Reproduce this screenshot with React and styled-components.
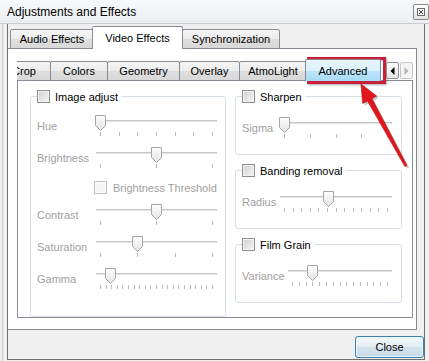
import React, { useId } from 'react';
import styled, { createGlobalStyle } from 'styled-components';

const GlobalStyle = createGlobalStyle`
  html, body {
    margin: 0;
    padding: 0;
    background: #f0f0f0;
  }
  body {
    font-family: "Liberation Sans", Arial, sans-serif;
    font-size: 11px;
    color: #000;
  }
`;

const Window = styled.div`
  position: relative;
  width: 429px;
  height: 361px;
  display: flex;
  flex-direction: column;
  background: #f0f0f0;
  overflow: hidden;
`;

const TitleBar = styled.div`
  height: 24px;
  box-sizing: border-box;
  display: flex;
  align-items: center;
  justify-content: space-between;
  padding-left: 7px;
  background: linear-gradient(#f8f9fa, #eceef0);
  border-bottom: 1px solid #c9cdd2;
`;

const Caption = styled.span`
  font-size: 12px;
  color: #000;
`;

const CloseX = styled.div`
  width: 16px;
  height: 16px;
  box-sizing: border-box;
  border: 1px solid #8a8a8a;
  border-radius: 2px;
  background: linear-gradient(#fdfdfd, #e4e4e4);
  display: flex;
  align-items: center;
  justify-content: center;
`;

const Frame = styled.div`
  flex: 1;
  display: flex;
  margin-left: 2px;
  border-left: 1px solid #c8c8c8;
  padding: 0 4px 1px 4px;
`;

const Client = styled.div`
  width: 418px;
  box-sizing: border-box;
  display: flex;
  flex-direction: column;
  border: 1px solid #6f6f6f;
  border-top: none;
  background: #f0f0f0;
`;

const TopTabs = styled.div`
  position: relative;
  z-index: 1;
  height: 25px;
  display: flex;
  align-items: flex-end;
  padding-left: 2px;
  margin-bottom: -1px;
`;

const TopTab = styled.div`
  flex-shrink: 0;
  box-sizing: border-box;
  width: ${p => p.w}px;
  height: ${p => (p.active ? 23 : 20)}px;
  margin-left: ${p => p.ml || 0}px;
  margin-right: ${p => p.mr || 0}px;
  position: relative;
  z-index: ${p => (p.active ? 2 : 1)};
  display: flex;
  align-items: center;
  justify-content: center;
  border: 1px solid #898c95;
  border-bottom: ${p => (p.active ? 'none' : '1px solid #898c95')};
  border-radius: 2px 2px 0 0;
  background: ${p =>
    p.active ? '#fff' : 'linear-gradient(#f6f6f6, #ebebeb 50%, #dedede 51%, #d8d8d8)'};
`;

const TabPane = styled.div`
  width: 409px;
  height: 282px;
  box-sizing: border-box;
  display: flex;
  flex-direction: column;
  border: 1px solid #898c95;
  border-left: none;
  background: #fff;
  padding: 10px 3px 11px 9px;
`;

const InnerBar = styled.div`
  position: relative;
  z-index: 1;
  height: 22px;
  display: flex;
  margin-bottom: -1px;
`;

const Strip = styled.div`
  width: 369px;
  height: 22px;
  overflow: hidden;
  display: flex;
  align-items: flex-end;
`;

const InnerTab = styled.div`
  flex-shrink: 0;
  box-sizing: border-box;
  width: ${p => p.w}px;
  height: ${p => (p.active ? 22 : 20)}px;
  margin-left: ${p => p.ml}px;
  position: relative;
  z-index: ${p => (p.active ? 2 : 1)};
  display: flex;
  align-items: center;
  justify-content: center;
  border: 1px solid #898c95;
  border-bottom: ${p => (p.active ? 'none' : '1px solid #898c95')};
  border-radius: 2px 2px 0 0;
  background: ${p =>
    p.active
      ? 'linear-gradient(#eaf6fd, #d9f0fc 50%, #bee6fd 51%, #a7d9f5)'
      : 'linear-gradient(#f6f6f6, #ebebeb 50%, #dedede 51%, #d8d8d8)'};
`;

const Scrollers = styled.div`
  display: flex;
  gap: 1px;
  margin-top: 3px;
`;

const ScrollBtn = styled.div`
  width: 13px;
  height: 17px;
  box-sizing: border-box;
  border: 1px solid ${p => (p.disabled ? '#c4c6ca' : '#8e8f8f')};
  border-radius: 2px;
  background: ${p => (p.disabled ? '#f4f4f4' : 'linear-gradient(#ffffff, #e6e6e6)')};
  display: flex;
  align-items: center;
  justify-content: center;
`;

const InnerPane = styled.div`
  flex: 1;
  display: flex;
  gap: 9px;
  border: 1px solid #898c95;
  background: #fff;
  padding: 9px 10px 0 12px;
`;

const Column = styled.div`
  display: flex;
  flex-direction: column;
  gap: 9px;
`;

const Group = styled.fieldset`
  margin: 0;
  min-width: 0;
  box-sizing: border-box;
  width: ${p => p.w}px;
  border: 1px solid #d5dfe5;
  border-radius: 3px;
  padding: ${p => p.pt}px 6px ${p => p.pb}px;
`;

const Legend = styled.legend`
  display: flex;
  align-items: center;
  gap: 5px;
  height: 13px;
  padding: 0 3px 0 0;
  color: #000;
`;

const Check = styled.span`
  display: inline-block;
  flex-shrink: 0;
  width: 13px;
  height: 13px;
  box-sizing: border-box;
  border: 1px solid ${p => (p.disabled ? '#bfc1c4' : '#8e8f8f')};
  background: ${p =>
    p.disabled ? '#f5f5f5' : 'linear-gradient(135deg, #cfd1d4, #f5f5f5)'};
  box-shadow: inset 0 0 0 1px ${p => (p.disabled ? '#fbfbfb' : '#f3f3f3')};
`;

const Row = styled.div`
  display: flex;
  align-items: flex-start;
  height: ${p => p.h || 32}px;
`;

const Label = styled.div`
  width: ${p => p.w}px;
  flex-shrink: 0;
  padding-top: 5px;
  line-height: 13px;
  color: #a0a0a0;
`;

const OptionRow = styled.div`
  display: flex;
  align-items: center;
  gap: 6px;
  height: 25px;
  box-sizing: border-box;
  padding: 2px 0 10px 57px;
  color: #a0a0a0;
`;

const SliderSvg = styled.svg`
  display: block;
  flex-shrink: 0;
`;

const Footer = styled.div`
  flex: 1;
  display: flex;
  justify-content: flex-end;
  align-items: flex-start;
  padding-top: 6px;
`;

const Button = styled.div`
  width: 69px;
  height: 22px;
  box-sizing: border-box;
  display: flex;
  align-items: center;
  justify-content: center;
  border: 1px solid #3c7fb1;
  border-radius: 3px;
  background: linear-gradient(#f2f7fa, #e3edf3 48%, #d3e3ec 52%, #c9dce8);
  box-shadow: inset 0 0 0 1px #e9f4fb;
  color: #000;
`;

const Highlight = styled.div`
  position: absolute;
  left: 307px;
  top: 57px;
  width: 79px;
  height: 27px;
  box-sizing: border-box;
  border: 3px solid #c8203a;
  box-shadow: 1px 1px 2px rgba(0, 0, 0, 0.35), inset 1px 1px 1px rgba(0, 0, 0, 0.25);
  pointer-events: none;
`;

const ArrowSvg = styled.svg`
  position: absolute;
  left: 350px;
  top: 80px;
  pointer-events: none;
`;

function Slider({ w, value, ticks }) {
  const id = 'th' + useId().replace(/[^a-zA-Z0-9]/g, '');
  const lo = 6;
  const hi = w - 6;
  const cx = Math.round(lo + value * (hi - lo)) + 0.5;
  const marks = Array.from({ length: ticks }, (_, i) => Math.round(lo + (i * (hi - lo)) / (ticks - 1)) + 0.5);
  return (
    <SliderSvg width={w} height={22} viewBox={`0 0 ${w} 22`}>
      <defs>
        <linearGradient id={id} x1="0" y1="0" x2="0" y2="1">
          <stop offset="0" stopColor="#ffffff" />
          <stop offset="1" stopColor="#e2e2e2" />
        </linearGradient>
      </defs>
      <line x1={2} x2={w - 1} y1={5.5} y2={5.5} stroke="#c6c6c6" />
      <line x1={2} x2={w - 1} y1={6.5} y2={6.5} stroke="#e3e3e3" />
      {marks.map((x, i) => (
        <line key={i} x1={x} x2={x} y1={17} y2={21} stroke="#bcbcbc" />
      ))}
      <path d={`M${cx - 5} 0.5H${cx + 5}V10.5L${cx} 15.5L${cx - 5} 10.5Z`} fill={`url(#${id})`} stroke="#a6a6a6" />
    </SliderSvg>
  );
}

const innerTabs = [
  { name: 'Crop', w: 54, ml: -20 },
  { name: 'Colors', w: 58, ml: -1 },
  { name: 'Geometry', w: 73, ml: -1 },
  { name: 'Overlay', w: 61, ml: -1 },
  { name: 'AtmoLight', w: 68, ml: -1 },
  { name: 'Advanced', w: 76, ml: -2, active: true },
];

const imageRows = [
  { label: 'Hue', value: 0, ticks: 7 },
  { label: 'Brightness', value: 0.5, ticks: 3 },
  { threshold: true },
  { label: 'Contrast', value: 0.5, ticks: 3 },
  { label: 'Saturation', value: 0.33, ticks: 4 },
  { label: 'Gamma', value: 0.09, ticks: 21, h: 22 },
];

const rightGroups = [
  { title: 'Sharpen', label: 'Sigma', lw: 36, sw: 115, value: 0, ticks: 5 },
  { title: 'Banding removal', label: 'Radius', lw: 36, sw: 115, value: 0.43, ticks: 13 },
  { title: 'Film Grain', label: 'Variance', lw: 44, sw: 107, value: 0.21, ticks: 15 },
];

export default function App() {
  return (
    <Window>
      <GlobalStyle />
      <TitleBar>
        <Caption>Adjustments and Effects</Caption>
        <CloseX>
          <svg width="8" height="8" viewBox="0 0 8 8">
            <rect x="0.5" y="0.5" width="7" height="7" fill="none" stroke="#6a6a6a" />
            <path d="M2 2L6 6M6 2L2 6" stroke="#444" />
          </svg>
        </CloseX>
      </TitleBar>

      <Frame>
        <Client>
          <TopTabs>
            <TopTab w={84}>Audio Effects</TopTab>
            <TopTab w={91} ml={-2} mr={-1} active>Video Effects</TopTab>
            <TopTab w={98}>Synchronization</TopTab>
          </TopTabs>

          <TabPane>
            <InnerBar>
              <Strip>
                {innerTabs.map(t => (
                  <InnerTab key={t.name} w={t.w} ml={t.ml} active={t.active}>
                    {t.name}
                  </InnerTab>
                ))}
              </Strip>
              <Scrollers>
                <ScrollBtn>
                  <svg width="5" height="8" viewBox="0 0 5 8">
                    <path d="M4.5 0L0.5 4L4.5 8Z" fill="#000" />
                  </svg>
                </ScrollBtn>
                <ScrollBtn disabled>
                  <svg width="5" height="8" viewBox="0 0 5 8">
                    <path d="M0.5 0L4.5 4L0.5 8Z" fill="#b4b4b4" />
                  </svg>
                </ScrollBtn>
              </Scrollers>
            </InnerBar>

            <InnerPane>
              <Group w={196} pt={12} pb={13}>
                <Legend>
                  <Check />
                  Image adjust
                </Legend>
                {imageRows.map((r, i) =>
                  r.threshold ? (
                    <OptionRow key={i}>
                      <Check disabled />
                      Brightness Threshold
                    </OptionRow>
                  ) : (
                    <Row key={i} h={r.h}>
                      <Label w={57}>{r.label}</Label>
                      <Slider w={124} value={r.value} ticks={r.ticks} />
                    </Row>
                  )
                )}
              </Group>

              <Column>
                {rightGroups.map(g => (
                  <Group key={g.title} w={167} pt={14} pb={15}>
                    <Legend>
                      <Check />
                      {g.title}
                    </Legend>
                    <Row h={22}>
                      <Label w={g.lw}>{g.label}</Label>
                      <Slider w={g.sw} value={g.value} ticks={g.ticks} />
                    </Row>
                  </Group>
                ))}
              </Column>
            </InnerPane>
          </TabPane>

          <Footer>
            <Button>Close</Button>
          </Footer>
        </Client>
      </Frame>

      <Highlight />
      <ArrowSvg width="70" height="95" viewBox="0 0 70 95">
        <polygon
          points="13,6 28.7,18 23.9,20.6 59,87.4 56.9,88.6 19.5,23 14.7,25.6"
          fill="rgba(0,0,0,0.22)"
        />
        <polygon
          points="11,4 26.7,16 21.9,18.6 57,85.4 54.9,86.6 17.5,21 12.7,23.6"
          fill="#e3161e"
          stroke="#b50f16"
          strokeWidth="0.6"
          strokeLinejoin="round"
        />
      </ArrowSvg>
    </Window>
  );
}
